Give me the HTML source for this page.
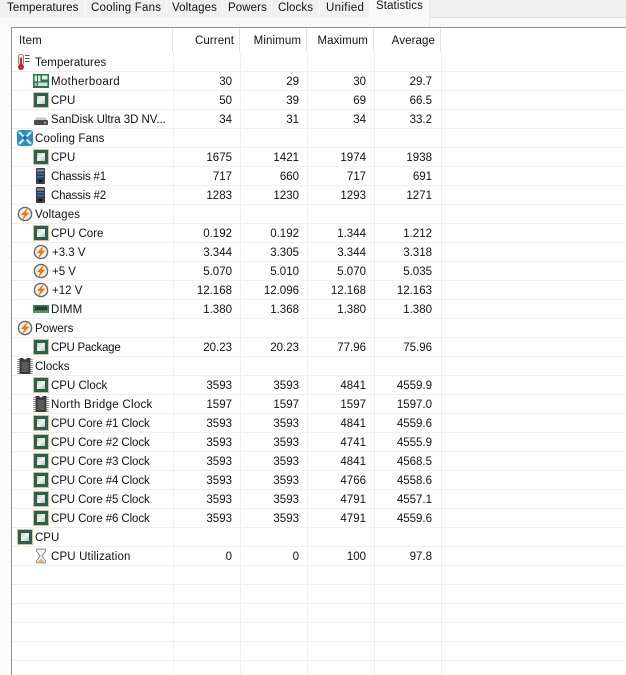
<!DOCTYPE html>
<html><head><meta charset="utf-8"><style>
html,body{margin:0;padding:0;width:626px;height:675px;overflow:hidden;background:#fff}
body{position:relative;font:11.5px/20px "Liberation Sans",sans-serif;color:#111}
div,span,svg{position:absolute}
#strip{left:0;top:0;width:626px;height:18px;background:#f0f0f0;border-bottom:0}
#sub{left:0;top:18px;width:626px;height:9px;background:#f9f9f9}
#sub2{left:0;top:27px;width:11px;height:648px;background:#fafafa}
.t{top:0;height:17px;line-height:15px;white-space:nowrap;letter-spacing:.1px}
.s{top:0;width:1px;height:17px;background:#fafafa}
#sel{left:369px;top:0;width:60px;height:27px;background:#f9f9f9;border-right:1px solid #e8e8e8}
#sl{left:430px;top:17px;width:196px;height:1px;background:#e4e4e4}
#top{left:11px;top:27px;width:615px;height:1px;background:#8f8f8f}
#left{left:11px;top:27px;width:1px;height:648px;background:#8f8f8f}
.h{top:32px;white-space:nowrap;line-height:18px;letter-spacing:.1px}
.hs{top:29px;width:1px;height:23px;background:#e3e3e3}
.v{top:52px;width:1px;height:623px;background:#f0f0f0}
.l{left:12px;width:614px;height:1px;background:#f0f0f0}
.x{white-space:nowrap;left:51px}
.p{white-space:nowrap;left:35px}
.a,.b,.c,.d{white-space:nowrap}
.a{right:394px}.b{right:327px}.c{right:260px}.d{right:194px}
.i{width:16px;height:16px;left:33px}
.j{width:16px;height:16px;left:17px}
</style></head><body>
<svg width="0" height="0" style="left:0;top:0">
<defs>
<linearGradient id="g" x1="0" y1="0" x2="1" y2="1"><stop offset="0" stop-color="#c4d0ca"/><stop offset=".5" stop-color="#eef1ef"/><stop offset="1" stop-color="#b4c4bb"/></linearGradient>
<symbol id="cpu" viewBox="0 0 16 16"><rect x=".5" y=".5" width="15" height="15" fill="none" stroke="#8f8a4a" stroke-width="1" stroke-dasharray="1 1"/><rect x="1" y="1" width="14" height="14" fill="#2f5f48"/><rect x="4" y="4" width="8" height="8" fill="url(#g)"/></symbol>
<symbol id="mb" viewBox="0 0 16 16"><rect x="0" y="1" width="16" height="14" fill="#2a7349"/><rect x="1.5" y="2.5" width="2.5" height="6" fill="#dcebe1"/><rect x="5" y="2.5" width="2.5" height="6" fill="#dcebe1"/><rect x="9" y="2.5" width="5.5" height="4" fill="#e8f2ec"/><rect x="5" y="9.5" width="9.5" height="3.5" fill="#cfe3d6"/><rect x="1.5" y="10" width="2.5" height="3" fill="#9cc4ab"/></symbol>
<symbol id="hd" viewBox="0 0 16 16"><path d="M2 9 L3.5 6.5 H12.5 L14 9Z" fill="#c9c9c9"/><rect x="1" y="9" width="14" height="5" rx="1" fill="#4a4a4a"/><rect x="11" y="11" width="2" height="1.5" fill="#7fd07f"/></symbol>
<symbol id="ch" viewBox="0 0 16 16"><rect x="3" y="0" width="9" height="16" rx="1" fill="#333b47"/><rect x="4" y="1.5" width="7" height="2" fill="#8b95a3"/><rect x="4" y="5" width="7" height="1.5" fill="#2f6fc0"/><rect x="4" y="8" width="7" height="1.5" fill="#2f6fc0"/><rect x="6" y="12" width="3" height="2" fill="#111"/></symbol>
<symbol id="vt" viewBox="0 0 16 16"><circle cx="8" cy="8" r="6.6" fill="#f4f2ee" stroke="#666" stroke-width="1.4"/><path d="M11.2 1 L3.8 9 H7.2 L4.8 15 L12.4 6.6 H8.8Z" fill="#ee7a12"/></symbol>
<symbol id="ck" viewBox="0 0 16 16"><path d="M2.5 0 H6 Q8 3 10 0 H13.5 V16 H2.5Z" fill="#3a3a3a"/><path d="M1.2 1V16M14.8 1V16" stroke="#888" stroke-width="2" stroke-dasharray="1 1"/><rect x="4.5" y="4" width="7" height="10" fill="#5a5a5a"/></symbol>
<symbol id="hg" viewBox="0 0 16 16"><path d="M3.5 1 H12.5 V3 L9 8 L12.5 13 V15 H3.5 V13 L7 8 L3.5 3Z" fill="#f6f6f6" stroke="#8a8a8a" stroke-width="1"/><path d="M4.5 14 L8 10.5 L11.5 14Z" fill="#e2b37c"/><rect x="3" y=".5" width="10" height="1.3" fill="#9a9a9a"/><rect x="3" y="14" width="10" height="1.5" fill="#aaa"/></symbol>
<symbol id="dm" viewBox="0 0 16 16"><rect x="0" y="4" width="16" height="8" fill="#3c7f57"/><path d="M2 5.5H14V9H2Z" fill="#28402f"/><path d="M0 11h16" stroke="#c7bd7a" stroke-dasharray="1 1"/></symbol>
</defs></svg>

<div id="strip"></div><div id="sub"></div><div id="sub2"></div>
<div id="sel"></div><div id="sl"></div>
<div class="s" style="left:84px"></div><div class="s" style="left:166px"></div><div class="s" style="left:222px"></div><div class="s" style="left:271px"></div><div class="s" style="left:319px"></div>
<div class="t" style="left:7px;top:1px">Temperatures</div>
<div class="t" style="left:91px;top:1px;letter-spacing:.2px">Cooling Fans</div>
<div class="t" style="left:172px;top:1px">Voltages</div>
<div class="t" style="left:228px;top:1px">Powers</div>
<div class="t" style="left:278px;top:1px">Clocks</div>
<div class="t" style="left:326px;top:1px;letter-spacing:.35px">Unified</div>
<div class="t" style="left:376px;top:-1px">Statistics</div>
<div id="top"></div><div id="left"></div>

<div class="h" style="left:19px">Item</div>
<div class="h" style="right:392px">Current</div>
<div class="h" style="right:325px">Minimum</div>
<div class="h" style="right:258px">Maximum</div>
<div class="h" style="right:191px">Average</div>
<div class="hs" style="left:172px"></div><div class="hs" style="left:239px"></div><div class="hs" style="left:306px"></div><div class="hs" style="left:373px"></div><div class="hs" style="left:440px"></div>
<div class="v" style="left:173px"></div><div class="v" style="left:240px"></div><div class="v" style="left:307px"></div><div class="v" style="left:374px"></div><div class="v" style="left:441px"></div>

<div class="l" style="top:71px"></div><div class="l" style="top:90px"></div><div class="l" style="top:109px"></div><div class="l" style="top:128px"></div><div class="l" style="top:147px"></div><div class="l" style="top:166px"></div><div class="l" style="top:185px"></div><div class="l" style="top:204px"></div><div class="l" style="top:223px"></div><div class="l" style="top:242px"></div><div class="l" style="top:261px"></div><div class="l" style="top:280px"></div><div class="l" style="top:299px"></div><div class="l" style="top:318px"></div><div class="l" style="top:337px"></div><div class="l" style="top:356px"></div><div class="l" style="top:375px"></div><div class="l" style="top:394px"></div><div class="l" style="top:413px"></div><div class="l" style="top:432px"></div><div class="l" style="top:451px"></div><div class="l" style="top:470px"></div><div class="l" style="top:489px"></div><div class="l" style="top:508px"></div><div class="l" style="top:527px"></div><div class="l" style="top:546px"></div><div class="l" style="top:565px"></div><div class="l" style="top:584px"></div><div class="l" style="top:603px"></div><div class="l" style="top:622px"></div><div class="l" style="top:641px"></div><div class="l" style="top:660px"></div>

<svg class="j" style="top:54px" viewBox="0 0 16 16"><rect x="1.5" y="0" width="5" height="11" rx="2.2" fill="#eee" stroke="#777" stroke-width=".9"/><rect x="3" y="3.5" width="2" height="9" fill="#c8252c"/><circle cx="4" cy="13" r="3" fill="#c8252c"/><path d="M8 1.5H12.5M8 4.5H12.5M8 7.5H12.5" stroke="#555" stroke-width="1"/></svg>
<div class="p" style="top:53px;letter-spacing:.08px">Temperatures</div>

<svg class="i" style="top:73px"><use href="#mb"/></svg><div class="x" style="top:72px;letter-spacing:.35px">Motherboard</div><div class="a" style="top:72px">30</div><div class="b" style="top:72px">29</div><div class="c" style="top:72px">30</div><div class="d" style="top:72px">29.7</div>
<svg class="i" style="top:92px"><use href="#cpu"/></svg><div class="x" style="top:91px">CPU</div><div class="a" style="top:91px">50</div><div class="b" style="top:91px">39</div><div class="c" style="top:91px">69</div><div class="d" style="top:91px">66.5</div>
<svg class="i" style="top:111px"><use href="#hd"/></svg><div class="x" style="top:110px;letter-spacing:-.05px">SanDisk Ultra 3D NV...</div><div class="a" style="top:110px">34</div><div class="b" style="top:110px">31</div><div class="c" style="top:110px">34</div><div class="d" style="top:110px">33.2</div>

<svg class="j" style="top:130px" viewBox="0 0 16 16"><rect width="16" height="16" rx="3" fill="#2f8cc4"/><path d="M2 2L14 14M14 2L2 14" stroke="#e4f2fa" stroke-width="2"/><circle cx="8" cy="8" r="2.2" fill="#1e6fa3"/></svg>
<div class="p" style="top:129px;letter-spacing:.15px">Cooling Fans</div>
<svg class="i" style="top:149px"><use href="#cpu"/></svg><div class="x" style="top:148px">CPU</div><div class="a" style="top:148px">1675</div><div class="b" style="top:148px">1421</div><div class="c" style="top:148px">1974</div><div class="d" style="top:148px">1938</div>
<svg class="i" style="top:168px"><use href="#ch"/></svg><div class="x" style="top:167px;letter-spacing:-.2px">Chassis #1</div><div class="a" style="top:167px">717</div><div class="b" style="top:167px">660</div><div class="c" style="top:167px">717</div><div class="d" style="top:167px">691</div>
<svg class="i" style="top:187px"><use href="#ch"/></svg><div class="x" style="top:186px;letter-spacing:-.2px">Chassis #2</div><div class="a" style="top:186px">1283</div><div class="b" style="top:186px">1230</div><div class="c" style="top:186px">1293</div><div class="d" style="top:186px">1271</div>

<svg class="j" style="top:206px"><use href="#vt"/></svg><div class="p" style="top:205px;letter-spacing:.12px">Voltages</div>
<svg class="i" style="top:225px"><use href="#cpu"/></svg><div class="x" style="top:224px">CPU Core</div><div class="a" style="top:224px">0.192</div><div class="b" style="top:224px">0.192</div><div class="c" style="top:224px">1.344</div><div class="d" style="top:224px">1.212</div>
<svg class="i" style="top:244px"><use href="#vt"/></svg><div class="x" style="top:243px;left:52px">+3.3 V</div><div class="a" style="top:243px">3.344</div><div class="b" style="top:243px">3.305</div><div class="c" style="top:243px">3.344</div><div class="d" style="top:243px">3.318</div>
<svg class="i" style="top:263px"><use href="#vt"/></svg><div class="x" style="top:262px;left:52px">+5 V</div><div class="a" style="top:262px">5.070</div><div class="b" style="top:262px">5.010</div><div class="c" style="top:262px">5.070</div><div class="d" style="top:262px">5.035</div>
<svg class="i" style="top:282px"><use href="#vt"/></svg><div class="x" style="top:281px;left:52px">+12 V</div><div class="a" style="top:281px">12.168</div><div class="b" style="top:281px">12.096</div><div class="c" style="top:281px">12.168</div><div class="d" style="top:281px">12.163</div>
<svg class="i" style="top:301px"><use href="#dm"/></svg><div class="x" style="top:300px;letter-spacing:.2px">DIMM</div><div class="a" style="top:300px">1.380</div><div class="b" style="top:300px">1.368</div><div class="c" style="top:300px">1.380</div><div class="d" style="top:300px">1.380</div>

<svg class="j" style="top:320px"><use href="#vt"/></svg><div class="p" style="top:319px">Powers</div>
<svg class="i" style="top:339px"><use href="#cpu"/></svg><div class="x" style="top:338px;letter-spacing:-.25px">CPU Package</div><div class="a" style="top:338px">20.23</div><div class="b" style="top:338px">20.23</div><div class="c" style="top:338px">77.96</div><div class="d" style="top:338px">75.96</div>

<svg class="j" style="top:358px"><use href="#ck"/></svg><div class="p" style="top:357px">Clocks</div>
<svg class="i" style="top:377px"><use href="#cpu"/></svg><div class="x" style="top:376px">CPU Clock</div><div class="a" style="top:376px">3593</div><div class="b" style="top:376px">3593</div><div class="c" style="top:376px">4841</div><div class="d" style="top:376px">4559.9</div>
<svg class="i" style="top:396px"><use href="#ck"/></svg><div class="x" style="top:395px;letter-spacing:.28px">North Bridge Clock</div><div class="a" style="top:395px">1597</div><div class="b" style="top:395px">1597</div><div class="c" style="top:395px">1597</div><div class="d" style="top:395px">1597.0</div>
<svg class="i" style="top:415px"><use href="#cpu"/></svg><div class="x" style="top:414px;letter-spacing:-.1px">CPU Core #1 Clock</div><div class="a" style="top:414px">3593</div><div class="b" style="top:414px">3593</div><div class="c" style="top:414px">4841</div><div class="d" style="top:414px">4559.6</div>
<svg class="i" style="top:434px"><use href="#cpu"/></svg><div class="x" style="top:433px;letter-spacing:-.1px">CPU Core #2 Clock</div><div class="a" style="top:433px">3593</div><div class="b" style="top:433px">3593</div><div class="c" style="top:433px">4741</div><div class="d" style="top:433px">4555.9</div>
<svg class="i" style="top:453px"><use href="#cpu"/></svg><div class="x" style="top:452px;letter-spacing:-.1px">CPU Core #3 Clock</div><div class="a" style="top:452px">3593</div><div class="b" style="top:452px">3593</div><div class="c" style="top:452px">4841</div><div class="d" style="top:452px">4568.5</div>
<svg class="i" style="top:472px"><use href="#cpu"/></svg><div class="x" style="top:471px;letter-spacing:-.1px">CPU Core #4 Clock</div><div class="a" style="top:471px">3593</div><div class="b" style="top:471px">3593</div><div class="c" style="top:471px">4766</div><div class="d" style="top:471px">4558.6</div>
<svg class="i" style="top:491px"><use href="#cpu"/></svg><div class="x" style="top:490px;letter-spacing:-.1px">CPU Core #5 Clock</div><div class="a" style="top:490px">3593</div><div class="b" style="top:490px">3593</div><div class="c" style="top:490px">4791</div><div class="d" style="top:490px">4557.1</div>
<svg class="i" style="top:510px"><use href="#cpu"/></svg><div class="x" style="top:509px;letter-spacing:-.1px">CPU Core #6 Clock</div><div class="a" style="top:509px">3593</div><div class="b" style="top:509px">3593</div><div class="c" style="top:509px">4791</div><div class="d" style="top:509px">4559.6</div>

<svg class="j" style="top:529px"><use href="#cpu"/></svg><div class="p" style="top:528px">CPU</div>
<svg class="i" style="top:548px"><use href="#hg"/></svg><div class="x" style="top:547px;letter-spacing:.15px">CPU Utilization</div><div class="a" style="top:547px">0</div><div class="b" style="top:547px">0</div><div class="c" style="top:547px">100</div><div class="d" style="top:547px">97.8</div>
</body></html>
